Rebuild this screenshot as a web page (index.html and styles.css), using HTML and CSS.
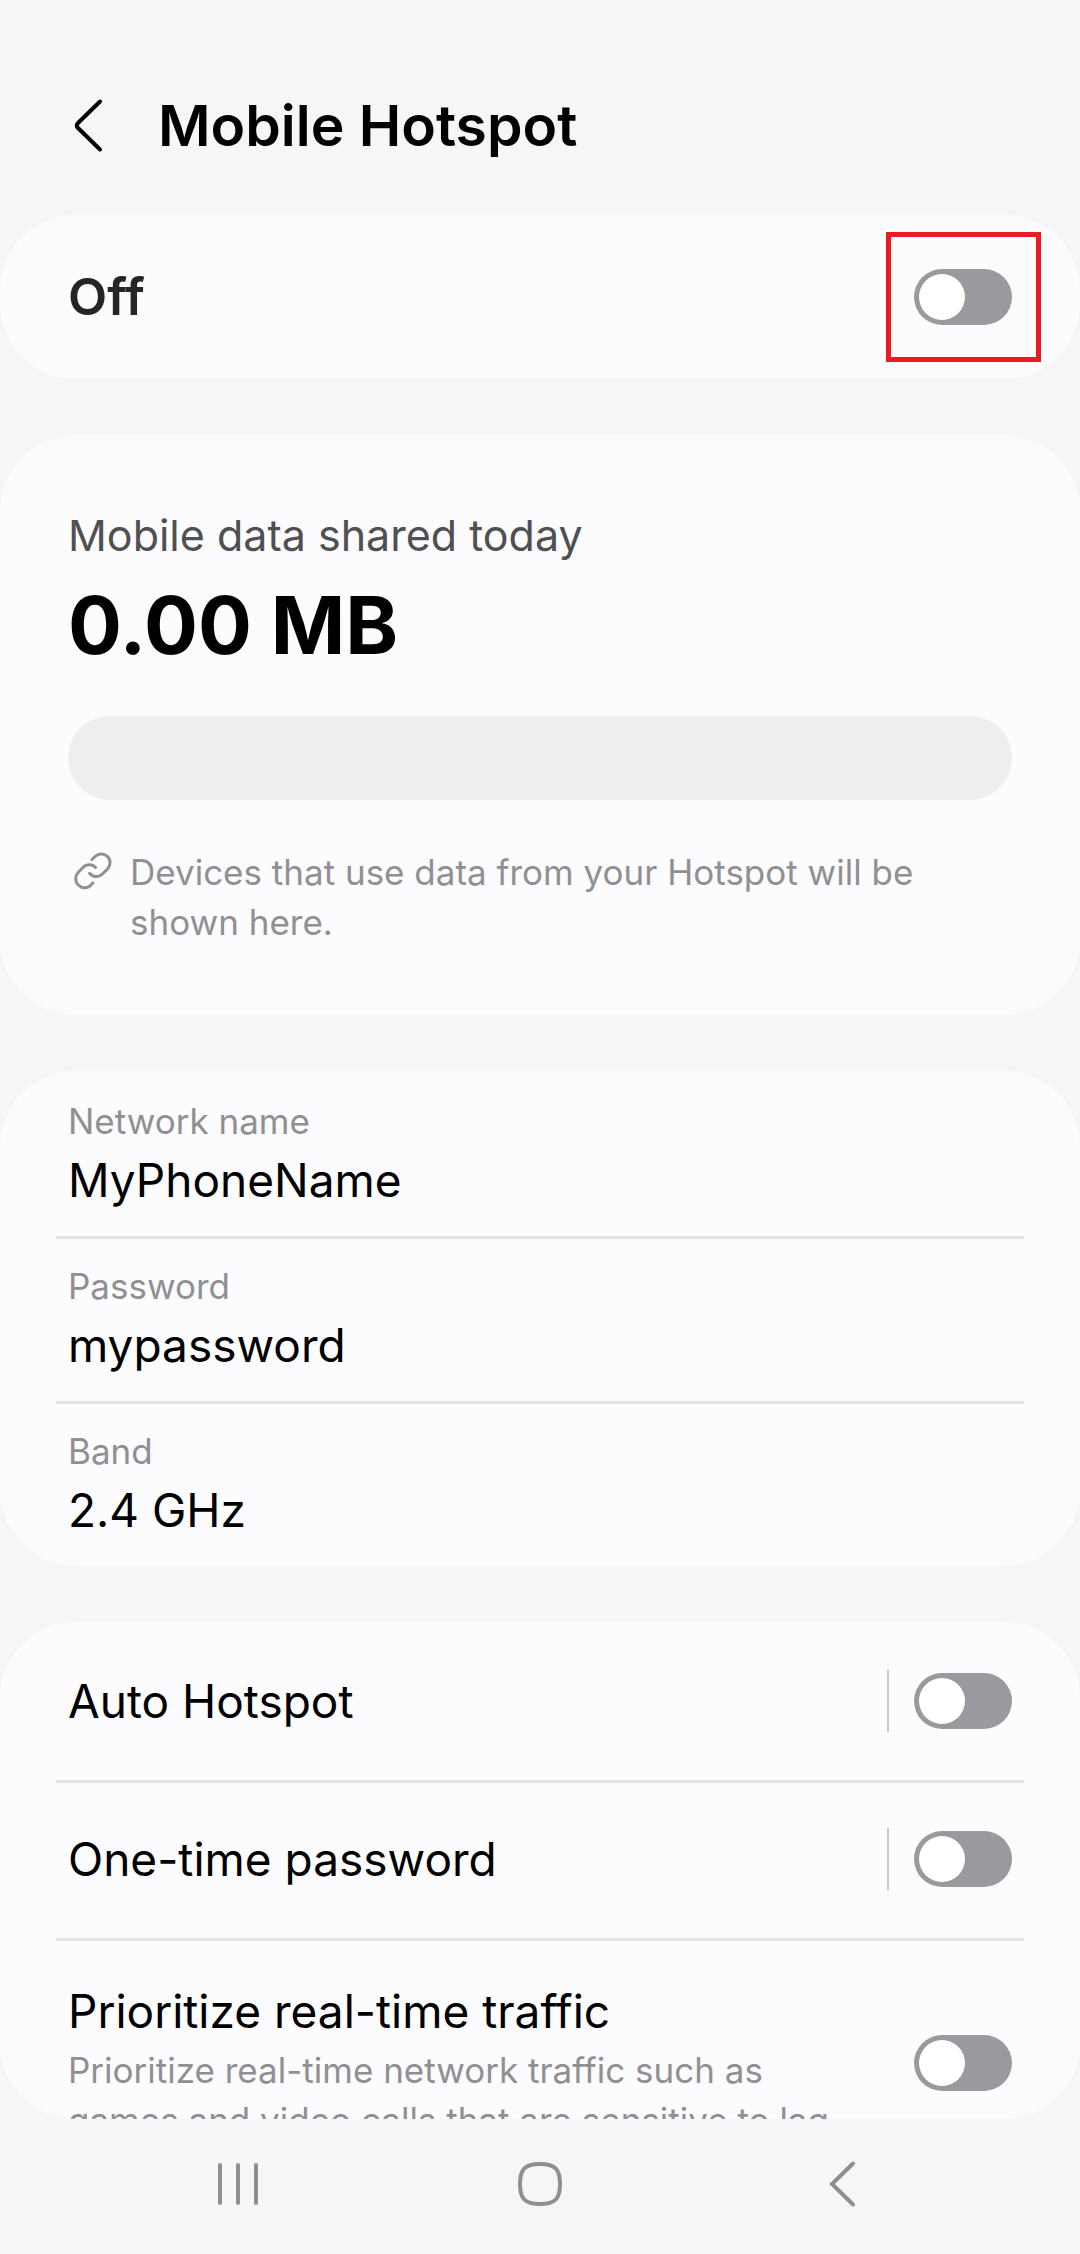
FILE: index.html
```html
<!DOCTYPE html>
<html lang="en">
<head>
    <meta charset="UTF-8">
    <meta name="viewport" content="width=device-width, initial-scale=1.0">
    <title>Mobile Hotspot</title>
    <link rel="stylesheet" href="styles.css">
</head>
<body>
    <header class="header">
        <button class="back" aria-label="Back">
            <svg width="32" height="56" viewBox="0 0 32 56" fill="none" stroke="#000" stroke-width="4" stroke-linecap="round" stroke-linejoin="round">
                <path d="M28 3.500 L6 25 Q3.500 27.500 6 30 L28 51.500"/>
            </svg>
        </button>
        <h1>Mobile Hotspot</h1>
    </header>

    <main class="content">
        <section class="card master">
            <div class="row">
                <label class="state" for="hotspot">Off</label>
                <span class="highlight"><input type="checkbox" role="switch" class="switch" id="hotspot"></span>
            </div>
        </section>

        <section class="card usage">
            <h2>Mobile data shared today</h2>
            <p class="amount">0.00 MB</p>
            <div class="bar"></div>
            <div class="hint">
                <svg width="38" height="38" viewBox="0 0 38 38" fill="none" stroke="#909092" stroke-width="3" stroke-linecap="round">
                    <path d="M18 7.500 L20.500 5 C24 1.300 29.500 0.800 33 4 C37 7.500 37 13 33.500 17 L28 22.300 C24 25.500 19 25.500 15.500 21.300"/>
                    <path d="M21.500 15.500 C18 11.800 12.500 11.800 9 15.500 L4.500 20 C0.800 24 0.800 29.500 4.500 33.200 C8 36.700 13.500 36.700 17 33 L19 30.800"/>
                </svg>
                <p>Devices that use data from your Hotspot will be shown here.</p>
            </div>
        </section>

        <section class="card">
            <button class="row field">
                <span class="label">Network name</span>
                <span class="value">MyPhoneName</span>
            </button>
            <button class="row field">
                <span class="label">Password</span>
                <span class="value">mypassword</span>
            </button>
            <button class="row field">
                <span class="label">Band</span>
                <span class="value">2.4 GHz</span>
            </button>
        </section>

        <section class="card options">
            <div class="row">
                <label class="value" for="auto">Auto Hotspot</label>
                <span class="split"><input type="checkbox" role="switch" class="switch" id="auto"></span>
            </div>
            <div class="row">
                <label class="value" for="otp">One-time password</label>
                <span class="split"><input type="checkbox" role="switch" class="switch" id="otp"></span>
            </div>
            <div class="row tall">
                <div class="text">
                    <label class="value" for="realtime">Prioritize real-time traffic</label>
                    <p class="description">Prioritize real-time network traffic such as games and video calls that are sensitive to lag,</p>
                </div>
                <input type="checkbox" role="switch" class="switch" id="realtime">
            </div>
        </section>
    </main>

    <nav class="navbar">
        <button aria-label="Recents">
            <svg width="48" height="48" viewBox="0 0 48 48" fill="none" stroke="#8f8f91" stroke-width="4" stroke-linecap="round">
                <path d="M6 5 V43 M24 5 V43 M42 5 V43"/>
            </svg>
        </button>
        <button aria-label="Home">
            <svg width="48" height="48" viewBox="0 0 48 48" fill="none" stroke="#8f8f91" stroke-width="4">
                <path d="M24 4 C39 4 44 9 44 24 C44 39 39 44 24 44 C9 44 4 39 4 24 C4 9 9 4 24 4 Z"/>
            </svg>
        </button>
        <button aria-label="Back">
            <svg width="48" height="48" viewBox="0 0 48 48" fill="none" stroke="#8f8f91" stroke-width="4" stroke-linecap="round">
                <path d="M35 3.500 L14 24 L35 44.500"/>
            </svg>
        </button>
    </nav>
</body>
</html>
```

FILE: styles.css
```css
* {
    box-sizing: border-box;
}
body {
    margin: 0;
    height: 100vh;
    display: flex;
    flex-direction: column;
    font-family: Inter, Roboto, sans-serif;
    background-color: #f6f6f8;
    color: #000;
}
h1, h2, p {
    margin: 0;
}
button {
    padding: 0;
    border: none;
    background: none;
    font-family: inherit;
    color: inherit;
    cursor: pointer;
}
svg {
    display: block;
}

/* header */
.header {
    display: flex;
    align-items: center;
    gap: 54px;
    padding: 86px 72px 49px;
}
.header h1 {
    font-size: 57px;
    line-height: 80px;
    font-weight: 600;
}

/* scrolling area */
.content {
    flex: 1;
    min-height: 0;
    overflow-y: auto;
    scrollbar-width: none;
    border-radius: 0 0 76px 76px;
}
.card {
    padding: 3px 56px 0;
    margin-bottom: 56px;
    border-radius: 76px;
    background-color: #fcfcfe;
}
.row {
    display: flex;
    align-items: center;
    justify-content: space-between;
    width: 100%;
    min-height: 155px;
    padding: 0 12px;
}
.row + .row {
    border-top: 3px solid #e4e4e6;
    min-height: 158px;
}
.master {
    padding: 0 56px;
}
.master .row {
    min-height: 164px;
}
.state {
    font-size: 51px;
    line-height: 60px;
    font-weight: 600;
    color: #252528;
}

/* data usage */
.usage {
    padding: 70px 68px 68px;
}
.usage h2 {
    font-size: 43px;
    line-height: 60px;
    font-weight: 400;
    color: #505053;
}
.amount {
    margin-top: 10px;
    font-size: 80px;
    line-height: 100px;
    font-weight: 700;
}
.bar {
    height: 84px;
    margin-top: 41px;
    border-radius: 42px;
    background-color: #eee;
}
.hint {
    display: flex;
    align-items: flex-start;
    gap: 18px;
    margin-top: 47px;
    padding-left: 6px;
    font-size: 35px;
    line-height: 50px;
    color: #909092;
}
.hint svg {
    flex-shrink: 0;
    margin-top: 5px;
}

/* network fields */
.field {
    flex-direction: column;
    align-items: flex-start;
    justify-content: flex-start;
    gap: 4px;
    padding: 22px 12px 26px;
    text-align: left;
}
.label {
    font-size: 35px;
    line-height: 50px;
    color: #909093;
}
.value {
    font-size: 46px;
    line-height: 60px;
}

/* switches */
.switch {
    appearance: none;
    display: block;
    flex-shrink: 0;
    width: 98px;
    height: 56px;
    margin: 0;
    padding: 5px;
    border-radius: 28px;
    background-color: #9a999e;
    cursor: pointer;
}
.switch::before {
    content: "";
    display: block;
    width: 46px;
    height: 46px;
    border-radius: 50%;
    background-color: #fff;
}
.switch:checked {
    background-color: #3e7bf2;
}
.switch:checked::before {
    margin-left: auto;
}
.split {
    display: flex;
    align-items: center;
    height: 62px;
    padding-left: 25px;
    border-left: 2px solid #c8c8cb;
}
.highlight {
    position: relative;
}
.highlight::after {
    content: "";
    position: absolute;
    inset: -37px -29px -37px -28px;
    border: 5px solid #e91c26;
    pointer-events: none;
}
.options .row {
    padding-bottom: 3px;
}
.options .tall {
    gap: 56px;
    padding: 40px 12px;
}
.text {
    flex: 1;
}
.description {
    margin-top: 4px;
    font-size: 35px;
    line-height: 50px;
    color: #909093;
}

/* system navigation */
.navbar {
    display: grid;
    grid-template-columns: repeat(3, 28%);
    justify-content: center;
    height: 135px;
    padding-bottom: 5px;
}
.navbar button {
    display: flex;
    align-items: center;
    justify-content: center;
}
```
